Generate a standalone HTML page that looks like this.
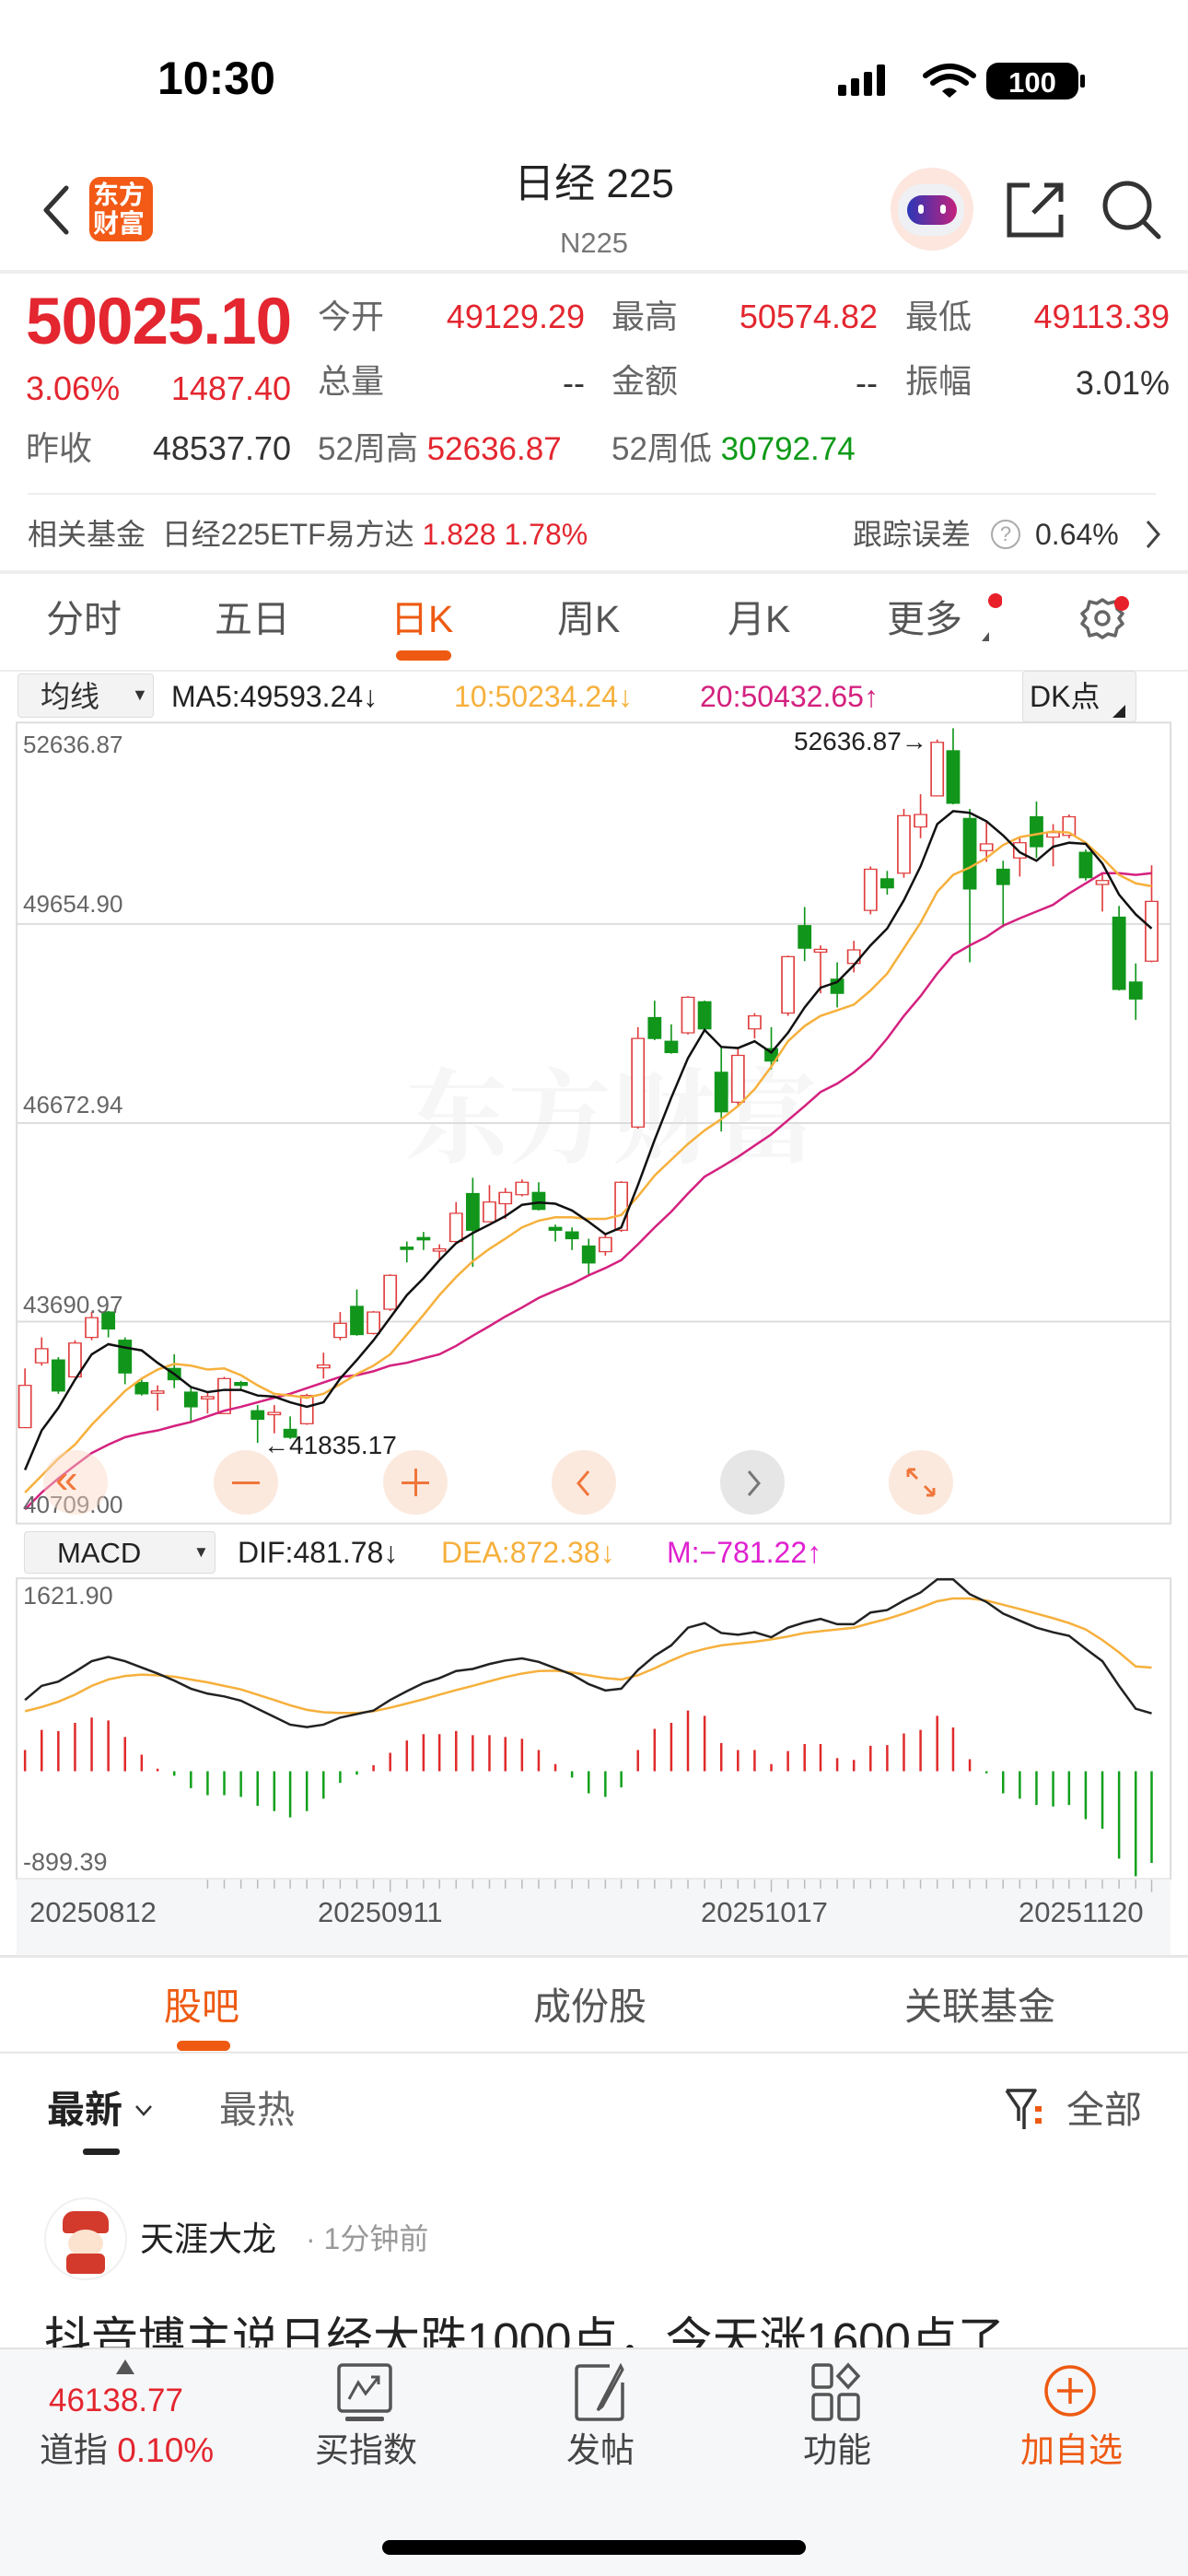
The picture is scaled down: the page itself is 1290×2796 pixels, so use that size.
<!DOCTYPE html>
<html><head><meta charset="utf-8"><style>
*{margin:0;padding:0;box-sizing:border-box}
body{width:1290px;height:2796px;position:relative;background:#fff;font-family:"Liberation Sans","Noto Sans CJK SC",sans-serif;color:#222;overflow:hidden}
.t{position:absolute;white-space:nowrap;line-height:1}
.r{color:#e3262f}.g{color:#0f9a18}.gy{color:#666}
.ra{text-align:right}
</style></head><body>

<!-- status bar -->
<div class="t" style="left:171px;top:60px;font-size:50px;font-weight:bold;color:#000">10:30</div>
<svg style="position:absolute;left:905px;top:66px" width="280" height="44">
<rect x="5" y="26" width="9" height="12" rx="2" fill="#000"/><rect x="19" y="19" width="9" height="19" rx="2" fill="#000"/><rect x="33" y="12" width="9" height="26" rx="2" fill="#000"/><rect x="47" y="4" width="9" height="34" rx="2" fill="#000"/>
<path d="M100 16 Q126 -4 152 16" stroke="#000" stroke-width="6" fill="none" stroke-linecap="round"/><path d="M108 24 Q126 10 144 24" stroke="#000" stroke-width="6" fill="none" stroke-linecap="round"/><path d="M118 33 L126 40 L134 33 Q126 26 118 33Z" fill="#000"/>
<rect x="166" y="2" width="100" height="40" rx="13" fill="#000"/><rect x="268" y="15" width="5" height="14" rx="2" fill="#000"/>
<text x="216" y="34" text-anchor="middle" font-family="Liberation Sans" font-weight="bold" font-size="31" fill="#fff">100</text>
</svg>

<!-- header -->
<svg style="position:absolute;left:40px;top:200px" width="40" height="60"><path d="M32 4 L10 28 L32 52" stroke="#333" stroke-width="5" fill="none" stroke-linecap="round" stroke-linejoin="round"/></svg>
<div style="position:absolute;left:97px;top:192px;width:69px;height:70px;background:#f25a16;border-radius:12px"></div>
<div class="t" style="left:101px;top:196px;font-size:28px;font-weight:bold;color:#fff;line-height:31px">东方<br>财富</div>
<div class="t" style="left:0;width:1290px;text-align:center;top:178px;font-size:44px;color:#222">日经 225</div>
<div class="t gy" style="left:0;width:1290px;text-align:center;top:248px;font-size:31px;color:#777">N225</div>
<div style="position:absolute;left:967px;top:182px;width:90px;height:90px;border-radius:50%;background:#fce6de"></div>
<div style="position:absolute;left:975px;top:200px;width:72px;height:56px;border-radius:26px;background:#eef0f4"></div>
<div style="position:absolute;left:985px;top:212px;width:54px;height:32px;border-radius:16px;background:linear-gradient(90deg,#2b37b8,#c3217b)"></div>
<div style="position:absolute;left:997px;top:222px;width:6px;height:10px;border-radius:3px;background:#fff"></div>
<div style="position:absolute;left:1021px;top:222px;width:6px;height:10px;border-radius:3px;background:#fff"></div>
<svg style="position:absolute;left:1090px;top:195px" width="70" height="66"><path d="M28 6 H6 V60 H62 V38" stroke="#333" stroke-width="5" fill="none"/><path d="M32 36 L62 6 M44 6 H62 V24" stroke="#333" stroke-width="5" fill="none"/></svg>
<svg style="position:absolute;left:1194px;top:193px" width="70" height="70"><circle cx="30" cy="30" r="24" stroke="#333" stroke-width="5" fill="none"/><path d="M48 48 L64 64" stroke="#333" stroke-width="5" stroke-linecap="round"/></svg>

<div style="position:absolute;left:0;top:293px;width:1290px;height:4px;background:#eee"></div>

<!-- quote -->
<div class="t r" style="left:28px;top:314px;font-size:71px;font-weight:bold;letter-spacing:-1px">50025.10</div>
<div class="t gy" style="left:345px;top:326px;font-size:36px">今开</div>
<div class="t r ra" style="left:435px;width:200px;top:326px;font-size:36px">49129.29</div>
<div class="t gy" style="left:664px;top:326px;font-size:36px">最高</div>
<div class="t r ra" style="left:753px;width:200px;top:326px;font-size:36px">50574.82</div>
<div class="t gy" style="left:983px;top:326px;font-size:36px">最低</div>
<div class="t r ra" style="left:1070px;width:200px;top:326px;font-size:36px">49113.39</div>

<div class="t r" style="left:28px;top:404px;font-size:36px">3.06%</div>
<div class="t r ra" style="left:150px;width:166px;top:404px;font-size:36px">1487.40</div>
<div class="t gy" style="left:345px;top:396px;font-size:36px">总量</div>
<div class="t ra" style="left:535px;width:100px;top:398px;font-size:36px;color:#333">--</div>
<div class="t gy" style="left:664px;top:396px;font-size:36px">金额</div>
<div class="t ra" style="left:853px;width:100px;top:398px;font-size:36px;color:#333">--</div>
<div class="t gy" style="left:983px;top:396px;font-size:36px">振幅</div>
<div class="t ra" style="left:1070px;width:200px;top:398px;font-size:36px;color:#333">3.01%</div>

<div class="t gy" style="left:28px;top:469px;font-size:36px">昨收</div>
<div class="t ra" style="left:130px;width:186px;top:469px;font-size:36px;color:#333">48537.70</div>
<div class="t" style="left:345px;top:470px;font-size:35px"><span class="gy">52周高</span> <span class="r">52636.87</span></div>
<div class="t" style="left:664px;top:470px;font-size:35px"><span class="gy">52周低</span> <span class="g">30792.74</span></div>

<div style="position:absolute;left:30px;top:535px;width:1225px;height:2px;background:#eee"></div>
<div class="t" style="left:30px;top:564px;font-size:32px;color:#555">相关基金&nbsp; 日经225ETF易方达 <span class="r">1.828 1.78%</span></div>
<div class="t" style="left:926px;top:564px;font-size:32px;color:#555">跟踪误差</div>
<div style="position:absolute;left:1076px;top:564px;width:32px;height:32px;border:2px solid #aaa;border-radius:50%;color:#aaa;font-size:22px;text-align:center;line-height:28px">?</div>
<div class="t" style="left:1124px;top:564px;font-size:32px;color:#333">0.64%</div>
<svg style="position:absolute;left:1240px;top:562px" width="24" height="36"><path d="M6 4 L18 18 L6 32" stroke="#444" stroke-width="3" fill="none"/></svg>
<div style="position:absolute;left:0;top:619px;width:1290px;height:4px;background:#eee"></div>

<!-- tabs -->
<div class="t" style="left:50px;top:652px;font-size:41px;color:#555">分时</div>
<div class="t" style="left:233px;top:652px;font-size:41px;color:#555">五日</div>
<div class="t" style="left:424px;top:652px;font-size:41px;color:#ee5a12">日K</div>
<div style="position:absolute;left:430px;top:706px;width:60px;height:11px;border-radius:6px;background:#ee5a12"></div>
<div class="t" style="left:605px;top:652px;font-size:41px;color:#555">周K</div>
<div class="t" style="left:790px;top:652px;font-size:41px;color:#555">月K</div>
<div class="t" style="left:963px;top:652px;font-size:41px;color:#555">更多</div>
<svg style="position:absolute;left:1058px;top:640px" width="30" height="60"><circle cx="23" cy="12" r="8" fill="#e8202a"/><path d="M8 56 L16 46 L16 56Z" fill="#555"/></svg>
<svg style="position:absolute;left:1170px;top:645px" width="60" height="60"><circle cx="27" cy="26" r="7" stroke="#666" stroke-width="3.5" fill="none"/><path d="M27 6 L33 10 L41 8 L43 16 L49 21 L45 26 L49 32 L43 37 L41 45 L33 43 L27 47 L21 43 L13 45 L11 37 L5 32 L9 26 L5 21 L11 16 L13 8 L21 10Z" stroke="#666" stroke-width="3.5" fill="none" stroke-linejoin="round"/><circle cx="48" cy="10" r="8" fill="#e8202a"/></svg>
<div style="position:absolute;left:0;top:727px;width:1290px;height:2px;background:#eee"></div>

<!-- MA legend -->
<div style="position:absolute;left:19px;top:731px;width:148px;height:48px;background:#f3f3f3;border:1px solid #ddd;border-radius:4px"></div>
<div class="t" style="left:44px;top:740px;font-size:32px;color:#333">均线</div>
<div class="t" style="left:143px;top:745px;font-size:18px;color:#333">▼</div>
<div class="t" style="left:186px;top:740px;font-size:32px;color:#222">MA5:49593.24↓</div>
<div class="t" style="left:493px;top:740px;font-size:32px;color:#f6b03c">10:50234.24↓</div>
<div class="t" style="left:760px;top:740px;font-size:32px;color:#d4217f">20:50432.65↑</div>
<div style="position:absolute;left:1110px;top:728px;width:124px;height:56px;background:#f3f3f3;border:1px solid #ddd;border-radius:4px"></div>
<div class="t" style="left:1118px;top:740px;font-size:32px;color:#222">DK点</div>
<svg style="position:absolute;left:1208px;top:765px" width="16" height="16"><path d="M0 14 L14 0 L14 14Z" fill="#222"/></svg>

<!-- watermark -->
<div class="t" style="left:440px;top:1150px;font-size:112px;font-weight:bold;color:rgba(0,0,0,0.035);font-family:'Noto Serif CJK SC',serif">东方财富</div>

<!-- K chart -->
<svg style="position:absolute;left:0;top:720px" width="1290" height="960" viewBox="0 0 1568 1568" preserveAspectRatio="none">
<g stroke="#ddd" stroke-width="2" fill="none">
<rect x="22" y="105" width="1523" height="1420" vector-effect="non-scaling-stroke"/>
<line x1="22" y1="462" x2="1545" y2="462" vector-effect="non-scaling-stroke"/>
<line x1="22" y1="815" x2="1545" y2="815" vector-effect="non-scaling-stroke"/>
<line x1="22" y1="1167" x2="1545" y2="1167" vector-effect="non-scaling-stroke"/>
</g>
<g stroke-width="2" fill="#fff" stroke="#e03c3c">
<line x1="33" y1="1250" x2="33" y2="1355"/><rect x="25" y="1280" width="16" height="75"/>
<line x1="55" y1="1195" x2="55" y2="1245"/><rect x="47" y="1215" width="16" height="25"/>
<line x1="99" y1="1200" x2="99" y2="1265"/><rect x="91" y="1205" width="16" height="60"/>
<line x1="121" y1="1150" x2="121" y2="1200"/><rect x="113" y="1160" width="16" height="35"/>
<line x1="208" y1="1280" x2="208" y2="1325"/><rect x="200" y="1290" width="16" height="4"/>
<line x1="274" y1="1290" x2="274" y2="1330"/><rect x="266" y="1300" width="16" height="4"/>
<line x1="296" y1="1265" x2="296" y2="1330"/><rect x="288" y="1268" width="16" height="62"/>
<line x1="362" y1="1315" x2="362" y2="1365"/><rect x="354" y="1328" width="16" height="4"/>
<line x1="405" y1="1295" x2="405" y2="1350"/><rect x="397" y="1298" width="16" height="50"/>
<line x1="427" y1="1222" x2="427" y2="1268"/><rect x="419" y="1244" width="16" height="5"/>
<line x1="449" y1="1150" x2="449" y2="1200"/><rect x="441" y="1170" width="16" height="25"/>
<line x1="493" y1="1148" x2="493" y2="1190"/><rect x="485" y="1150" width="16" height="38"/>
<line x1="515" y1="1083" x2="515" y2="1148"/><rect x="507" y="1085" width="16" height="60"/>
<line x1="580" y1="1030" x2="580" y2="1058"/><rect x="572" y="1038" width="16" height="4"/>
<line x1="602" y1="955" x2="602" y2="1030"/><rect x="594" y="975" width="16" height="50"/>
<line x1="646" y1="925" x2="646" y2="990"/><rect x="638" y="955" width="16" height="35"/>
<line x1="667" y1="930" x2="667" y2="985"/><rect x="659" y="938" width="16" height="20"/>
<line x1="689" y1="915" x2="689" y2="945"/><rect x="681" y="920" width="16" height="22"/>
<line x1="799" y1="1010" x2="799" y2="1050"/><rect x="791" y="1018" width="16" height="25"/>
<line x1="820" y1="918" x2="820" y2="1008"/><rect x="812" y="920" width="16" height="85"/>
<line x1="842" y1="645" x2="842" y2="825"/><rect x="834" y="665" width="16" height="157"/>
<line x1="908" y1="590" x2="908" y2="658"/><rect x="900" y="592" width="16" height="63"/>
<line x1="974" y1="680" x2="974" y2="785"/><rect x="966" y="695" width="16" height="83"/>
<line x1="996" y1="620" x2="996" y2="665"/><rect x="988" y="625" width="16" height="23"/>
<line x1="1040" y1="518" x2="1040" y2="625"/><rect x="1032" y="520" width="16" height="100"/>
<line x1="1083" y1="500" x2="1083" y2="585"/><rect x="1075" y="507" width="16" height="5"/>
<line x1="1127" y1="492" x2="1127" y2="548"/><rect x="1119" y="508" width="16" height="24"/>
<line x1="1149" y1="360" x2="1149" y2="445"/><rect x="1141" y="365" width="16" height="73"/>
<line x1="1193" y1="258" x2="1193" y2="380"/><rect x="1185" y="270" width="16" height="102"/>
<line x1="1215" y1="232" x2="1215" y2="310"/><rect x="1207" y="268" width="16" height="22"/>
<line x1="1237" y1="135" x2="1237" y2="235"/><rect x="1229" y="140" width="16" height="95"/>
<line x1="1302" y1="280" x2="1302" y2="352"/><rect x="1294" y="320" width="16" height="12"/>
<line x1="1346" y1="310" x2="1346" y2="378"/><rect x="1338" y="318" width="16" height="27"/>
<line x1="1390" y1="285" x2="1390" y2="360"/><rect x="1382" y="300" width="16" height="8"/>
<line x1="1411" y1="268" x2="1411" y2="310"/><rect x="1403" y="272" width="16" height="33"/>
<line x1="1455" y1="370" x2="1455" y2="440"/><rect x="1447" y="385" width="16" height="7"/>
<line x1="1520" y1="358" x2="1520" y2="530"/><rect x="1512" y="422" width="16" height="106"/>
</g>
<g stroke="#11961b" stroke-width="2" fill="#11961b">
<line x1="77" y1="1230" x2="77" y2="1295"/><rect x="69" y="1235" width="16" height="55"/>
<line x1="143" y1="1148" x2="143" y2="1195"/><rect x="135" y="1150" width="16" height="30"/>
<line x1="165" y1="1195" x2="165" y2="1278"/><rect x="157" y="1200" width="16" height="58"/>
<line x1="187" y1="1268" x2="187" y2="1298"/><rect x="179" y="1275" width="16" height="20"/>
<line x1="230" y1="1225" x2="230" y2="1285"/><rect x="222" y="1250" width="16" height="20"/>
<line x1="252" y1="1285" x2="252" y2="1345"/><rect x="244" y="1292" width="16" height="26"/>
<line x1="318" y1="1272" x2="318" y2="1290"/><rect x="310" y="1275" width="16" height="5"/>
<line x1="340" y1="1315" x2="340" y2="1382"/><rect x="332" y="1325" width="16" height="15"/>
<line x1="383" y1="1335" x2="383" y2="1375"/><rect x="375" y="1358" width="16" height="14"/>
<line x1="471" y1="1110" x2="471" y2="1192"/><rect x="463" y="1140" width="16" height="50"/>
<line x1="537" y1="1025" x2="537" y2="1062"/><rect x="529" y="1035" width="16" height="4"/>
<line x1="559" y1="1008" x2="559" y2="1040"/><rect x="551" y="1018" width="16" height="4"/>
<line x1="624" y1="912" x2="624" y2="1070"/><rect x="616" y="940" width="16" height="65"/>
<line x1="711" y1="920" x2="711" y2="970"/><rect x="703" y="938" width="16" height="30"/>
<line x1="733" y1="995" x2="733" y2="1025"/><rect x="725" y="1000" width="16" height="5"/>
<line x1="755" y1="1000" x2="755" y2="1040"/><rect x="747" y="1008" width="16" height="12"/>
<line x1="777" y1="1020" x2="777" y2="1085"/><rect x="769" y="1033" width="16" height="30"/>
<line x1="864" y1="598" x2="864" y2="668"/><rect x="856" y="628" width="16" height="37"/>
<line x1="886" y1="640" x2="886" y2="692"/><rect x="878" y="670" width="16" height="20"/>
<line x1="930" y1="598" x2="930" y2="650"/><rect x="922" y="600" width="16" height="48"/>
<line x1="952" y1="680" x2="952" y2="830"/><rect x="944" y="725" width="16" height="70"/>
<line x1="1018" y1="645" x2="1018" y2="720"/><rect x="1010" y="683" width="16" height="22"/>
<line x1="1062" y1="432" x2="1062" y2="528"/><rect x="1054" y="465" width="16" height="40"/>
<line x1="1105" y1="530" x2="1105" y2="610"/><rect x="1097" y="560" width="16" height="25"/>
<line x1="1171" y1="368" x2="1171" y2="410"/><rect x="1163" y="382" width="16" height="16"/>
<line x1="1258" y1="115" x2="1258" y2="250"/><rect x="1250" y="155" width="16" height="93"/>
<line x1="1280" y1="258" x2="1280" y2="530"/><rect x="1272" y="275" width="16" height="125"/>
<line x1="1324" y1="350" x2="1324" y2="468"/><rect x="1316" y="365" width="16" height="27"/>
<line x1="1368" y1="245" x2="1368" y2="345"/><rect x="1360" y="272" width="16" height="53"/>
<line x1="1433" y1="330" x2="1433" y2="385"/><rect x="1425" y="335" width="16" height="45"/>
<line x1="1477" y1="430" x2="1477" y2="580"/><rect x="1469" y="450" width="16" height="128"/>
<line x1="1499" y1="532" x2="1499" y2="632"/><rect x="1491" y="565" width="16" height="30"/>
</g>
<polyline fill="none" stroke="#d4217f" stroke-width="2.5" vector-effect="non-scaling-stroke" points="33,1500 55,1470 77,1445 99,1422 121,1400 143,1385 165,1372 187,1365 208,1360 230,1352 252,1345 274,1335 296,1325 318,1318 340,1310 362,1302 383,1295 405,1285 427,1275 449,1265 471,1262 493,1255 515,1245 537,1240 559,1232 580,1225 602,1210 624,1192 646,1175 667,1158 689,1142 711,1125 733,1112 755,1100 777,1085 799,1072 820,1058 842,1030 864,1000 886,972 908,940 930,910 952,893 974,875 996,855 1018,835 1040,810 1062,785 1083,760 1105,745 1127,725 1149,700 1171,665 1193,625 1215,590 1237,550 1258,517 1280,500 1302,485 1324,465 1346,452 1368,440 1390,428 1411,408 1433,390 1455,372 1477,372 1499,375 1520,372"/>
<polyline fill="none" stroke="#f6b03c" stroke-width="2.5" vector-effect="non-scaling-stroke" points="33,1470 55,1440 77,1410 99,1385 121,1350 143,1320 165,1290 187,1268 208,1252 230,1242 252,1245 274,1252 296,1250 318,1262 340,1280 362,1295 383,1298 405,1302 427,1295 449,1278 471,1260 493,1245 515,1225 537,1190 559,1155 580,1120 602,1088 624,1060 646,1038 667,1020 689,1000 711,988 733,982 755,982 777,985 799,985 820,978 842,945 864,908 886,880 908,852 930,828 952,808 974,785 996,755 1018,715 1040,670 1062,643 1083,625 1105,615 1127,605 1149,580 1171,550 1193,505 1215,460 1237,405 1258,375 1280,362 1302,345 1324,322 1346,308 1368,303 1390,298 1411,300 1433,318 1455,345 1477,375 1499,390 1520,395"/>
<polyline fill="none" stroke="#111" stroke-width="2.5" vector-effect="non-scaling-stroke" points="33,1430 55,1360 77,1320 99,1270 121,1225 143,1207 165,1213 187,1218 208,1240 230,1260 252,1283 274,1292 296,1288 318,1288 340,1298 362,1300 383,1310 405,1318 427,1310 449,1268 471,1235 493,1200 515,1160 537,1120 559,1090 580,1058 602,1028 624,1010 646,995 667,980 689,960 711,956 733,958 755,970 777,990 799,1012 820,1000 842,925 864,845 886,770 908,700 930,650 952,680 974,682 996,670 1018,690 1040,655 1062,610 1083,575 1105,565 1127,535 1149,500 1171,470 1193,420 1215,360 1237,285 1258,262 1280,265 1302,280 1324,305 1346,335 1368,350 1390,325 1411,318 1433,320 1455,355 1477,410 1499,445 1520,470"/>
</svg>
<div class="t" style="left:25px;top:795px;font-size:26px;color:#666">52636.87</div>
<div class="t" style="left:25px;top:968px;font-size:26px;color:#666">49654.90</div>
<div class="t" style="left:25px;top:1186px;font-size:26px;color:#666">46672.94</div>
<div class="t" style="left:25px;top:1403px;font-size:26px;color:#666">43690.97</div>
<div class="t" style="left:25px;top:1620px;font-size:26px;color:#666">40709.00</div>
<div class="t" style="left:862px;top:791px;font-size:28px;color:#222">52636.87→</div>
<div class="t" style="left:286px;top:1555px;font-size:28px;color:#222">←41835.17</div>

<!-- chart buttons -->
<div style="position:absolute;left:47px;top:1574px;width:70px;height:70px;border-radius:50%;background:rgba(250,215,195,0.45)"></div>
<div class="t" style="left:60px;top:1584px;font-size:44px;color:#f2763a">«</div>
<div style="position:absolute;left:232px;top:1574px;width:70px;height:70px;border-radius:50%;background:rgba(250,215,195,0.55)"></div>
<div style="position:absolute;left:252px;top:1608px;width:30px;height:3px;background:#f0763a"></div>
<div style="position:absolute;left:416px;top:1574px;width:70px;height:70px;border-radius:50%;background:rgba(250,215,195,0.55)"></div>
<div style="position:absolute;left:436px;top:1608px;width:30px;height:3px;background:#f0763a"></div><div style="position:absolute;left:450px;top:1594px;width:3px;height:30px;background:#f0763a"></div>
<div style="position:absolute;left:599px;top:1574px;width:70px;height:70px;border-radius:50%;background:rgba(250,215,195,0.55)"></div>
<svg style="position:absolute;left:620px;top:1594px" width="30" height="32"><path d="M19 3 L8 16 L19 29" stroke="#f0763a" stroke-width="3" fill="none"/></svg>
<div style="position:absolute;left:782px;top:1574px;width:70px;height:70px;border-radius:50%;background:#e6e6e6"></div>
<svg style="position:absolute;left:803px;top:1594px" width="30" height="32"><path d="M10 3 L21 16 L10 29" stroke="#777" stroke-width="3" fill="none"/></svg>
<div style="position:absolute;left:965px;top:1574px;width:70px;height:70px;border-radius:50%;background:rgba(250,215,195,0.55)"></div>
<svg style="position:absolute;left:982px;top:1591px" width="36" height="36"><path d="M4 4 L14 14 M4 4 H12 M4 4 V12 M32 32 L22 22 M32 32 H24 M32 32 V24" stroke="#f0763a" stroke-width="3" fill="none"/></svg>

<!-- MACD legend -->
<div style="position:absolute;left:26px;top:1662px;width:208px;height:46px;background:#f3f3f3;border:1px solid #ddd;border-radius:4px"></div>
<div class="t" style="left:62px;top:1670px;font-size:31px;color:#222">MACD</div>
<div class="t" style="left:210px;top:1676px;font-size:17px;color:#333">▼</div>
<div class="t" style="left:258px;top:1669px;font-size:32px;color:#222">DIF:481.78↓</div>
<div class="t" style="left:479px;top:1669px;font-size:32px;color:#f6b03c">DEA:872.38↓</div>
<div class="t" style="left:724px;top:1669px;font-size:32px;color:#e020d0">M:−781.22↑</div>

<svg style="position:absolute;left:0;top:1650px" width="1290" height="600" viewBox="0 0 1568 1568" preserveAspectRatio="none">
<rect x="22" y="165" width="1523" height="853" fill="none" stroke="#ddd" stroke-width="2" vector-effect="non-scaling-stroke"/>
<rect x="22" y="1018" width="1523" height="214" fill="#f5f6f8"/>
<line x1="0" y1="1237" x2="1568" y2="1237" stroke="#e6e6e6" stroke-width="3" vector-effect="non-scaling-stroke"/>
<path vector-effect="non-scaling-stroke" stroke="#bbb" stroke-width="1.5" d="M274 1020V1045M296 1020V1045M318 1020V1045M340 1020V1045M362 1020V1045M383 1020V1045M405 1020V1045M427 1020V1045M449 1020V1045M471 1020V1045M493 1020V1045M515 1020V1055M537 1020V1045M559 1020V1045M580 1020V1045M602 1020V1045M624 1020V1045M646 1020V1045M667 1020V1045M689 1020V1045M711 1020V1045M733 1020V1045M755 1020V1045M777 1020V1045M799 1020V1045M820 1020V1045M842 1020V1045M864 1020V1045M886 1020V1045M908 1020V1045M930 1020V1045M952 1020V1045M974 1020V1045M996 1020V1045M1018 1020V1055M1040 1020V1045M1062 1020V1045M1083 1020V1045M1105 1020V1045M1127 1020V1045M1149 1020V1045M1171 1020V1045M1193 1020V1045M1215 1020V1045M1237 1020V1045M1258 1020V1045M1280 1020V1045M1302 1020V1045M1324 1020V1045M1346 1020V1045M1368 1020V1045M1390 1020V1045M1411 1020V1045M1433 1020V1045M1455 1020V1045M1477 1020V1045M1499 1020V1045M1520 1020V1055"/>
<path vector-effect="non-scaling-stroke" stroke="#e02a2a" stroke-width="2.5" d="M33 712V652M55 712V595M77 712V598M99 712V575M121 712V560M143 712V568M165 712V615M187 712V665M208 712V705M493 712V695M515 712V660M537 712V625M559 712V607M580 712V607M602 712V598M624 712V610M646 712V610M667 712V615M689 712V620M711 712V652M733 712V692M842 712V652M864 712V592M886 712V575M908 712V540M930 712V555M952 712V632M974 712V652M996 712V652M1018 712V692M1040 712V655M1062 712V635M1083 712V635M1105 712V675M1127 712V680M1149 712V640M1171 712V638M1193 712V605M1215 712V595M1237 712V555M1258 712V588M1280 712V678"/>
<path vector-effect="non-scaling-stroke" stroke="#11a01b" stroke-width="2.5" d="M230 712V725M252 712V760M274 712V780M296 712V780M318 712V785M340 712V810M362 712V825M383 712V843M405 712V825M427 712V790M449 712V745M471 712V722M755 712V730M777 712V775M799 712V785M820 712V758M1302 712V718M1324 712V775M1346 712V790M1368 712V808M1390 712V812M1411 712V808M1433 712V848M1455 712V875M1477 712V960M1499 712V1010M1520 712V972"/>
<polyline fill="none" stroke="#f6b03c" stroke-width="2.5" vector-effect="non-scaling-stroke" points="33,542 55,530 77,515 99,495 121,470 143,452 165,442 187,438 208,440 230,444 252,452 274,460 296,470 318,480 340,495 362,510 383,525 405,538 427,545 449,547 471,547 493,542 515,532 537,520 559,508 580,495 602,482 624,470 646,457 667,445 689,435 711,428 733,427 755,432 777,440 799,448 820,452 842,440 864,420 886,398 908,378 930,365 952,355 974,350 996,345 1018,338 1040,330 1062,320 1083,315 1105,310 1127,305 1149,292 1171,280 1193,265 1215,248 1237,230 1258,222 1280,222 1302,228 1324,240 1346,252 1368,265 1390,278 1411,292 1433,310 1455,340 1477,375 1499,415 1520,418"/>
<polyline fill="none" stroke="#222" stroke-width="2.5" vector-effect="non-scaling-stroke" points="33,510 55,470 77,458 99,430 121,400 143,388 165,400 187,418 208,435 230,455 252,478 274,492 296,500 318,512 340,535 362,558 383,580 405,587 427,580 449,560 471,550 493,540 515,510 537,485 559,462 580,448 602,428 624,422 646,408 667,398 689,392 711,402 733,420 755,438 777,465 799,483 820,478 842,425 864,385 886,355 908,305 930,292 952,320 974,325 996,318 1018,332 1040,305 1062,290 1083,280 1105,295 1127,295 1149,262 1171,255 1193,228 1215,205 1237,168 1258,168 1280,210 1302,232 1324,265 1346,285 1368,305 1390,318 1411,328 1433,365 1455,400 1477,470 1499,535 1520,548"/>
<line x1="0" y1="1510" x2="1568" y2="1510" stroke="#e6e6e6" stroke-width="2" vector-effect="non-scaling-stroke"/>
</svg>
<div class="t" style="left:25px;top:1719px;font-size:27px;color:#666">1621.90</div>
<div class="t" style="left:25px;top:2008px;font-size:27px;color:#666">-899.39</div>
<div class="t" style="left:32px;top:2060px;font-size:31px;color:#555">20250812</div>
<div class="t" style="left:345px;top:2060px;font-size:31px;color:#555">20250911</div>
<div class="t" style="left:761px;top:2060px;font-size:31px;color:#555">20251017</div>
<div class="t" style="left:1106px;top:2060px;font-size:31px;color:#555">20251120</div>

<!-- sub tabs -->
<div class="t" style="left:178px;top:2158px;font-size:41px;color:#ee5a12">股吧</div>
<div style="position:absolute;left:192px;top:2215px;width:58px;height:11px;border-radius:6px;background:#ee5a12"></div>
<div class="t" style="left:579px;top:2158px;font-size:41px;color:#555">成份股</div>
<div class="t" style="left:982px;top:2158px;font-size:41px;color:#555">关联基金</div>

<div class="t" style="left:51px;top:2270px;font-size:41px;font-weight:bold;color:#222">最新</div>
<svg style="position:absolute;left:145px;top:2282px" width="22" height="18"><path d="M3 4 L11 13 L19 4" stroke="#333" stroke-width="2.5" fill="none"/></svg>
<div style="position:absolute;left:90px;top:2332px;width:40px;height:7px;border-radius:3px;background:#222"></div>
<div class="t" style="left:238px;top:2270px;font-size:41px;color:#666">最热</div>
<svg style="position:absolute;left:1090px;top:2266px" width="50" height="48"><path d="M3 3 H34 L22 22 V45" stroke="#333" stroke-width="3.5" fill="none" stroke-linejoin="round"/><path d="M3 3 L16 22 V36" stroke="#333" stroke-width="3.5" fill="none"/><rect x="34" y="20" width="7" height="6" fill="#ee5a12"/><rect x="34" y="33" width="7" height="6" fill="#ee5a12"/></svg>
<div class="t" style="left:1158px;top:2270px;font-size:41px;color:#555">全部</div>

<!-- post -->
<div style="position:absolute;left:48px;top:2385px;width:90px;height:90px;border-radius:50%;border:2px solid #f0f0f0;background:#fff"></div>
<div style="position:absolute;left:68px;top:2400px;width:50px;height:24px;border-radius:12px 12px 4px 4px;background:#d33a2c"></div>
<div style="position:absolute;left:74px;top:2420px;width:38px;height:30px;border-radius:50%;background:#fbe3cf"></div>
<div style="position:absolute;left:72px;top:2446px;width:42px;height:22px;border-radius:6px;background:#d33a2c"></div>
<div class="t" style="left:152px;top:2412px;font-size:37px;color:#222">天涯大龙</div>
<div class="t" style="left:332px;top:2414px;font-size:32px;color:#999">· 1分钟前</div>
<div class="t" style="left:48px;top:2514px;font-size:51px;color:#222">抖音博主说日经大跌1000点，今天涨1600点了</div>

<!-- bottom bar -->
<div style="position:absolute;left:0;top:2548px;width:1290px;height:248px;background:#f6f7f9;border-top:2px solid #e2e2e2"></div>
<svg style="position:absolute;left:124px;top:2559px" width="24" height="20"><path d="M12 2 L22 18 H2Z" fill="#555"/></svg>
<div class="t r" style="left:53px;top:2588px;font-size:35px">46138.77</div>
<div class="t" style="left:43px;top:2641px;font-size:37px;color:#444">道指 <span class="r">0.10%</span></div>
<svg style="position:absolute;left:365px;top:2564px" width="64" height="66"><rect x="3" y="3" width="56" height="50" rx="4" stroke="#555" stroke-width="3.5" fill="none"/><path d="M14 40 L24 22 L32 34 L46 16 M38 16 H46 V24" stroke="#555" stroke-width="3" fill="none"/><rect x="10" y="59" width="42" height="5" rx="2" fill="#555"/></svg>
<div class="t" style="left:342px;top:2641px;font-size:37px;color:#444">买指数</div>
<svg style="position:absolute;left:622px;top:2564px" width="60" height="66"><path d="M40 4 H8 Q4 4 4 8 V58 Q4 62 8 62 H50 Q54 62 54 58 V22" stroke="#555" stroke-width="3.5" fill="none"/><path d="M52 4 L30 46 L27 52 L32 48 L54 8Z" stroke="#555" stroke-width="3" fill="none"/></svg>
<div class="t" style="left:615px;top:2641px;font-size:37px;color:#444">发帖</div>
<svg style="position:absolute;left:880px;top:2564px" width="56" height="66"><rect x="3" y="3" width="20" height="24" rx="3" stroke="#555" stroke-width="3.5" fill="none"/><path d="M41 3 L52 15 L41 27 L30 15Z" stroke="#555" stroke-width="3.5" fill="none"/><rect x="3" y="35" width="20" height="27" rx="3" stroke="#555" stroke-width="3.5" fill="none"/><rect x="31" y="35" width="21" height="27" rx="3" stroke="#555" stroke-width="3.5" fill="none"/></svg>
<div class="t" style="left:872px;top:2641px;font-size:37px;color:#444">功能</div>
<svg style="position:absolute;left:1132px;top:2565px" width="60" height="60"><circle cx="30" cy="30" r="26" stroke="#ee5a12" stroke-width="3.5" fill="none"/><path d="M30 16 V44 M16 30 H44" stroke="#ee5a12" stroke-width="3.5"/></svg>
<div class="t" style="left:1108px;top:2641px;font-size:37px;color:#ee5a12">加自选</div>
<div style="position:absolute;left:415px;top:2757px;width:460px;height:16px;border-radius:8px;background:#000"></div>
</body></html>
